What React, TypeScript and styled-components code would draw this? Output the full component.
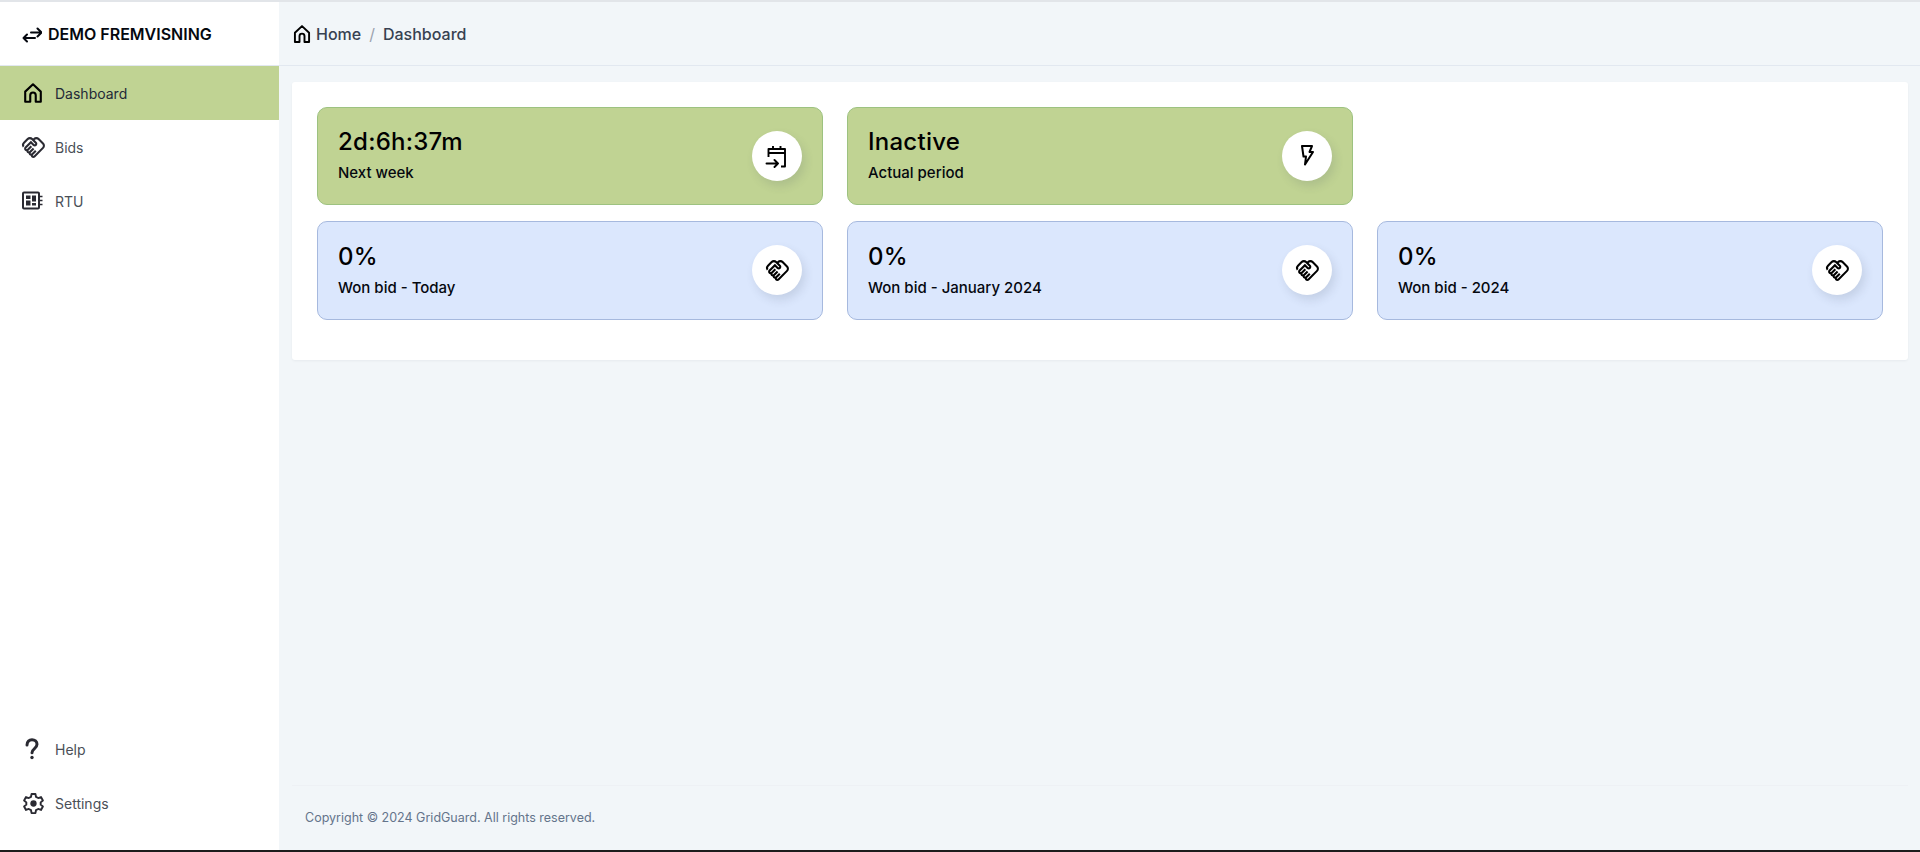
import { ReactNode } from "react";
import styled, { createGlobalStyle } from "styled-components";
import { MdOutlineHandshake } from "react-icons/md";

const GlobalStyle = createGlobalStyle`
  html, body {
    margin: 0;
    padding: 0;
    background: #f2f6f9;
    font-family: Inter, "Liberation Sans", sans-serif;
  }
  * {
    box-sizing: border-box;
  }
`;

const Page = styled.div`
  height: 100vh;
  display: flex;
  flex-direction: column;
  border-top: 2px solid #e2e5e9;
  border-bottom: 2px solid #1c1c1c;
  overflow: hidden;
`;

const Shell = styled.div`
  flex: 1;
  min-height: 0;
  display: flex;
`;

const Sidebar = styled.aside`
  width: 279px;
  flex-shrink: 0;
  background: #fff;
  display: flex;
  flex-direction: column;
`;

const Brand = styled.div`
  height: 64px;
  display: flex;
  align-items: center;
  gap: 6px;
  padding-left: 22px;
  border-bottom: 1px solid #e2e8f0;
  font-size: 16px;
  font-weight: 600;
  color: #05080f;
`;

const Nav = styled.nav`
  display: flex;
  flex-direction: column;
`;

const BottomNav = styled(Nav)`
  margin-top: auto;
  padding-bottom: 20px;
`;

const NavItem = styled.div<{ $active?: boolean }>`
  height: 54px;
  display: flex;
  align-items: center;
  padding-left: 22px;
  font-size: 14px;
  color: ${(p) => (p.$active ? "#1f2937" : "#4a4f57")};
  background: ${(p) => (p.$active ? "#c0d393" : "transparent")};
`;

const NavIcon = styled.span<{ $dark?: boolean }>`
  width: 22px;
  height: 24px;
  margin-right: 11px;
  display: flex;
  align-items: center;
  justify-content: center;
  color: ${(p) => (p.$dark ? "#000" : "#2a2a32")};

  svg {
    flex-shrink: 0;
  }
`;

const Main = styled.main`
  flex: 1;
  min-width: 0;
  display: flex;
  flex-direction: column;
`;

const Topbar = styled.header`
  height: 64px;
  display: flex;
  align-items: center;
  padding-left: 13px;
  border-bottom: 1px solid #e2e8f0;
  font-size: 16px;
  font-weight: 500;
  color: #374151;
`;

const CrumbIcon = styled.span`
  width: 22px;
  height: 24px;
  margin-right: 2px;
  display: flex;
  align-items: center;
  color: #000;
`;

const Slash = styled.span`
  margin: 0 8px;
  font-weight: 400;
  color: #9ca3af;
`;

const Panel = styled.section`
  margin: 16px 12px 0 13px;
  padding: 25px 24px 40.2px 25px;
  background: #fff;
  border-radius: 3px;
  box-shadow: 0 1px 3px rgba(15, 23, 42, 0.05);
  display: grid;
  grid-template-columns: repeat(3, 506px);
  column-gap: 24px;
  row-gap: 16px;
`;

const Card = styled.div<{ $tone: "green" | "blue" }>`
  height: 98.4px;
  padding: 0 20px;
  display: flex;
  align-items: center;
  justify-content: space-between;
  border-radius: 10px;
  border: 1px solid ${(p) => (p.$tone === "green" ? "#9dc280" : "#a6b9de")};
  background: ${(p) => (p.$tone === "green" ? "#c0d393" : "#dbe7fd")};
`;

const CardText = styled.div`
  display: flex;
  flex-direction: column;
  gap: 5px;
  margin-bottom: 3px;
`;

const Value = styled.div`
  font-size: 24px;
  line-height: 32px;
  font-weight: 500;
  letter-spacing: 0.25px;
  color: #000;
`;

const Label = styled.div`
  font-size: 15px;
  line-height: 20px;
  font-weight: 500;
  color: #05080f;
`;

const IconCircle = styled.div`
  width: 50px;
  height: 50px;
  margin-bottom: 1px;
  border-radius: 50%;
  background: #fff;
  display: flex;
  align-items: center;
  justify-content: center;
  color: #000;
  box-shadow: 3px 5px 10px rgba(60, 70, 90, 0.14);
`;

const Footer = styled.footer`
  margin: auto 12px 0 13px;
  height: 65px;
  padding: 16px 0 0 13px;
  border-top: 1px solid #eef1f5;
  font-size: 12.5px;
  line-height: 32px;
  color: #64748b;
`;

const Stroke = ({ size = 20, width = 2, children }: { size?: number; width?: number; children: ReactNode }) => (
  <svg
    width={size}
    height={size}
    viewBox="0 0 24 24"
    fill="none"
    stroke="currentColor"
    strokeWidth={width}
    strokeLinecap="round"
    strokeLinejoin="round"
  >
    {children}
  </svg>
);

const HomeIcon = ({ size = 22 }: { size?: number }) => (
  <Stroke size={size} width={2.3}>
    <path d="M3.500 21.500V10.500L12 2.500l8.500 8v11h-5.500v-7a3 3 0 0 0-6 0v7z" />
  </Stroke>
);

const TransferIcon = () => (
  <svg width="20" height="20" viewBox="0 0 20 20" fill="none" stroke="currentColor" strokeWidth="2" strokeLinecap="round" strokeLinejoin="round">
    <path d="M9 8.500h10.500M15.500 4.500l4 4-4 4" />
    <path d="M13 14H1.500M5 10.500 1.500 14 5 17.500" />
  </svg>
);

const ChipIcon = () => (
  <svg width="24" height="24" viewBox="0 0 24 24" fill="none">
    <rect x="2" y="3.500" width="16" height="16" rx="1" stroke="currentColor" strokeWidth="2" />
    <rect x="5" y="6.500" width="4.500" height="3.500" fill="currentColor" />
    <rect x="5" y="11.500" width="4.500" height="5" fill="currentColor" />
    <rect x="11" y="6.500" width="4" height="6" fill="currentColor" />
    <rect x="11" y="14" width="4" height="2.500" fill="currentColor" />
    <path d="M18.500 7.500h3M18.500 11.500h3M18.500 15.500h3" stroke="currentColor" strokeWidth="1.700" />
  </svg>
);

const QuestionIcon = () => (
  <Stroke size={24} width={3}>
    <path d="M6 8C6 4.500 8.200 2.800 11 2.800s5 1.700 5 4.500c0 4.500-5 4-5 8.500" />
    <path d="M11 20.500v.01" strokeWidth="3.400" />
  </Stroke>
);

const GearIcon = () => (
  <svg width="23" height="23" viewBox="0 0 24 24" fill="none" stroke="currentColor" strokeWidth="2" strokeLinejoin="round">
    <path d="M10 2h4l.6 3 2.300 1.300 2.900-1 2 3.500-2.300 2v2.400l2.300 2-2 3.500-2.900-1-2.300 1.300-.6 3h-4l-.6-3-2.300-1.300-2.900 1-2-3.500 2.300-2v-2.400l-2.300-2 2-3.500 2.900 1L9.400 5z" />
    <circle cx="12" cy="12" r="3.300" fill="currentColor" stroke="none" />
  </svg>
);

const CalendarIcon = () => (
  <Stroke size={24} width={1.9}>
    <path d="M3.500 13V5h16.500v17.500h-4M3.500 9h16.500M8 2v3M15.500 2v3" strokeLinecap="butt" />
    <path d="M1.500 19.500H13M9.500 16l3.500 3.500L9.500 23" />
  </Stroke>
);

const BoltIcon = () => (
  <Stroke size={24} width={2}>
    <path d="M7 2h10l-2.500 6H18l-8 12.500 1-8H8.500z" />
  </Stroke>
);

const stats = [
  { tone: "green", value: "2d:6h:37m", label: "Next week", icon: <CalendarIcon /> },
  { tone: "green", value: "Inactive", label: "Actual period", icon: <BoltIcon /> },
  null,
  { tone: "blue", value: "0%", label: "Won bid - Today", icon: <MdOutlineHandshake size={25} /> },
  { tone: "blue", value: "0%", label: "Won bid - January 2024", icon: <MdOutlineHandshake size={25} /> },
  { tone: "blue", value: "0%", label: "Won bid - 2024", icon: <MdOutlineHandshake size={25} /> },
] as const;

export default function App() {
  return (
    <>
      <GlobalStyle />
      <Page>
        <Shell>
          <Sidebar>
            <Brand>
              <TransferIcon />
              DEMO FREMVISNING
            </Brand>
            <Nav>
              <NavItem $active>
                <NavIcon $dark>
                  <HomeIcon />
                </NavIcon>
                Dashboard
              </NavItem>
              <NavItem>
                <NavIcon>
                  <MdOutlineHandshake size={25} />
                </NavIcon>
                Bids
              </NavItem>
              <NavItem>
                <NavIcon>
                  <ChipIcon />
                </NavIcon>
                RTU
              </NavItem>
            </Nav>
            <BottomNav>
              <NavItem>
                <NavIcon>
                  <QuestionIcon />
                </NavIcon>
                Help
              </NavItem>
              <NavItem>
                <NavIcon>
                  <GearIcon />
                </NavIcon>
                Settings
              </NavItem>
            </BottomNav>
          </Sidebar>
          <Main>
            <Topbar>
              <CrumbIcon>
                <HomeIcon size={20} />
              </CrumbIcon>
              Home
              <Slash>/</Slash>
              Dashboard
            </Topbar>
            <Panel>
              {stats.map((s, i) =>
                s ? (
                  <Card key={i} $tone={s.tone}>
                    <CardText>
                      <Value>{s.value}</Value>
                      <Label>{s.label}</Label>
                    </CardText>
                    <IconCircle>{s.icon}</IconCircle>
                  </Card>
                ) : (
                  <div key={i} />
                )
              )}
            </Panel>
            <Footer>Copyright © 2024 GridGuard. All rights reserved.</Footer>
          </Main>
        </Shell>
      </Page>
    </>
  );
}
